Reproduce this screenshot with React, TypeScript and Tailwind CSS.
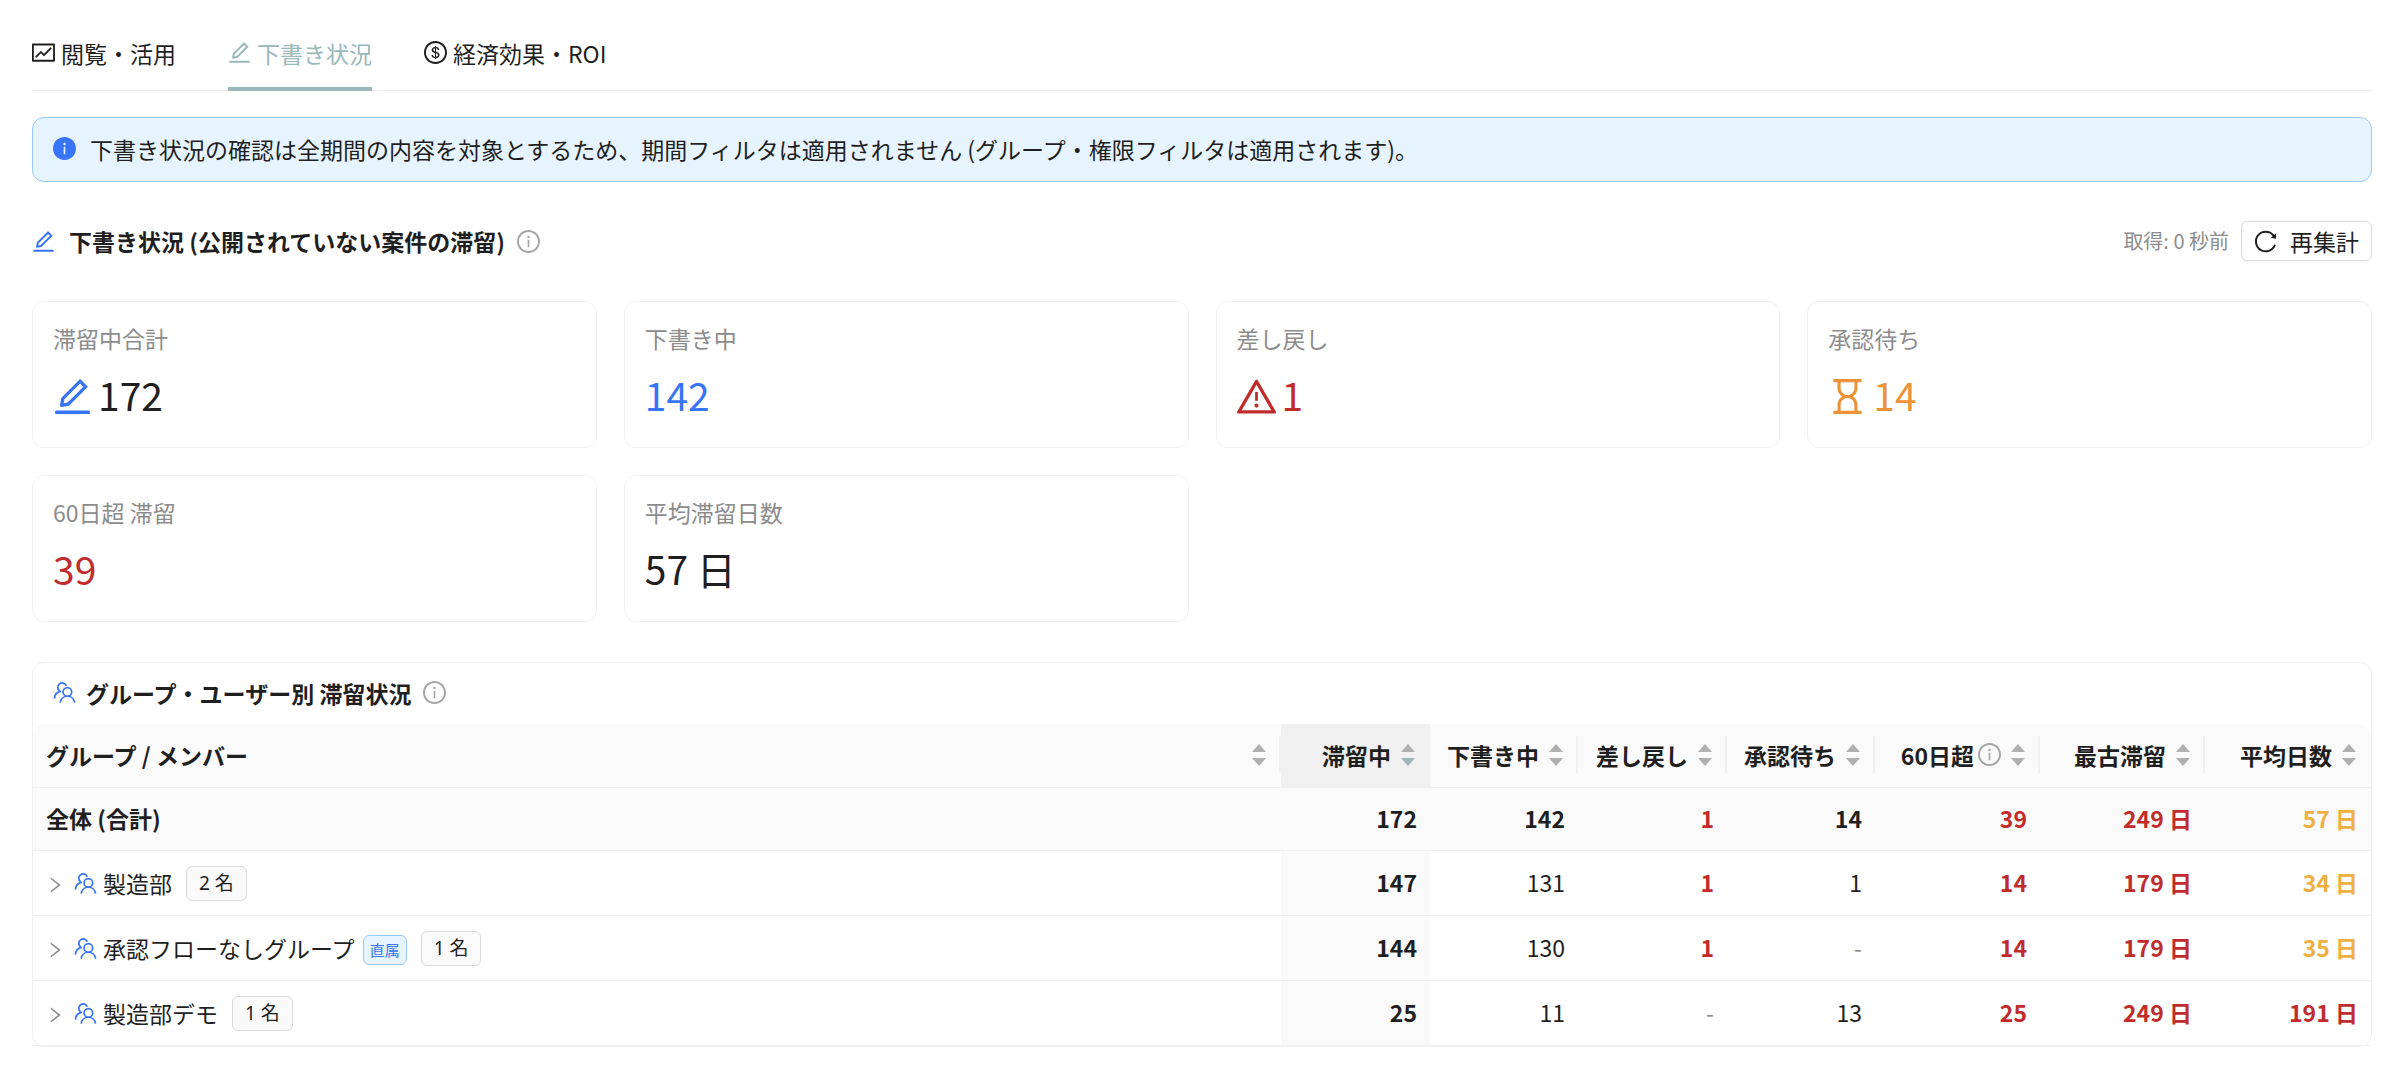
import { useState, type ReactNode } from "react";
import {
  AiFillInfoCircle,
  AiOutlineDollar,
  AiOutlineEdit,
  AiOutlineFund,
  AiOutlineHourglass,
  AiOutlineInfoCircle,
  AiOutlineReload,
  AiOutlineRight,
  AiOutlineWarning,
} from "react-icons/ai";
import clsx from "clsx";

const RED = "text-[#c02c2c]";
const AMBER = "text-[#efaf41]";

// trims the empty margin that the icon set keeps around each glyph
const TRIM = "64 64 896 896";

const TABS = [
  { key: "usage", label: "閲覧・活用", icon: <AiOutlineFund viewBox={TRIM} /> },
  { key: "drafts", label: "下書き状況", icon: <AiOutlineEdit viewBox={TRIM} /> },
  { key: "roi", label: "経済効果・ROI", icon: <AiOutlineDollar viewBox={TRIM} /> },
];

type Stat = { label: string; value: string; icon?: ReactNode; color?: string; iconColor?: string };

const STATS: Stat[] = [
  { label: "滞留中合計", value: "172", icon: <AiOutlineEdit viewBox={TRIM} />, iconColor: "text-[#3875f6]" },
  { label: "下書き中", value: "142", color: "text-[#3875f6]" },
  { label: "差し戻し", value: "1", icon: <AiOutlineWarning viewBox={TRIM} />, color: RED },
  { label: "承認待ち", value: "14", icon: <AiOutlineHourglass viewBox={TRIM} />, color: "text-[#ec9239]" },
  { label: "60日超 滞留", value: "39", color: RED },
  { label: "平均滞留日数", value: "57 日" },
];

const COLUMNS = [
  { key: "name", label: "グループ / メンバー", width: "" },
  { key: "total", label: "滞留中", width: "w-[149px]" },
  { key: "draft", label: "下書き中", width: "w-[148px]" },
  { key: "rejected", label: "差し戻し", width: "w-[149px]" },
  { key: "waiting", label: "承認待ち", width: "w-[148px]" },
  { key: "over60", label: "60日超", width: "w-[165px]", hint: true },
  { key: "oldest", label: "最古滞留", width: "w-[165px]" },
  { key: "average", label: "平均日数", width: "w-[166px]" },
];

type Row = {
  name: string;
  members?: number;
  direct?: boolean;
  total: number;
  draft: number;
  rejected: number;
  waiting: number;
  over60: number;
  oldest: number;
  average: number;
};

const ROWS: Row[] = [
  { name: "全体 (合計)", total: 172, draft: 142, rejected: 1, waiting: 14, over60: 39, oldest: 249, average: 57 },
  { name: "製造部", members: 2, total: 147, draft: 131, rejected: 1, waiting: 1, over60: 14, oldest: 179, average: 34 },
  { name: "承認フローなしグループ", members: 1, direct: true, total: 144, draft: 130, rejected: 1, waiting: 0, over60: 14, oldest: 179, average: 35 },
  { name: "製造部デモ", members: 1, total: 25, draft: 11, rejected: 0, waiting: 13, over60: 25, oldest: 249, average: 191 },
];

function GroupIcon({ className }: { className?: string }) {
  return (
    <svg viewBox="0 0 24 24" fill="none" stroke="currentColor" strokeWidth="1.8" className={className} aria-hidden="true">
      <circle cx="15" cy="11.400" r="4.500" />
      <path d="M7.500 22.600c.4-3.900 3.400-6.700 7.500-6.700s7.100 2.800 7.500 6.700" />
      <path d="M13.900 4.900A4.600 4.600 0 1 0 6.900 10.300" />
      <path d="M1.500 18.400c.2-3.400 2-6.200 5.200-7.300l1.700-.3" />
    </svg>
  );
}

function Sorter({ active }: { active?: boolean }) {
  return (
    <svg viewBox="0 0 14 22" className="h-[22px] w-3.5 shrink-0" aria-hidden="true">
      <path d="M7 0l7 8H0z" fill="#b0b0b0" />
      <path d="M7 22l7-8H0z" fill={active ? "#9ab8b9" : "#b0b0b0"} />
    </svg>
  );
}

function Count({ value, className }: { value: number; className?: string }) {
  if (value === 0) return <span className="text-[#8c8c8c]">-</span>;
  return <span className={className}>{value}</span>;
}

export default function App() {
  const [tab, setTab] = useState("drafts");

  return (
    <main className="min-h-screen bg-white pt-6 pr-6 pb-8 pl-8 font-['Noto_Sans_CJK_JP',sans-serif] text-[23px] leading-9 text-[#1f1f1f]">
      <div role="tablist" className="flex gap-[52px] border-b border-[#f0f0f0]">
        {TABS.map((t) => (
          <button
            key={t.key}
            type="button"
            role="tab"
            aria-selected={tab === t.key}
            onClick={() => setTab(t.key)}
            className={clsx(
              "-mb-px flex h-[67px] items-center gap-1.5 border-b-4 pb-1.5",
              tab === t.key ? "border-[#9ab8b9] text-[#9ab8b9]" : "border-transparent",
            )}
          >
            {t.icon}
            {t.label}
          </button>
        ))}
      </div>

      <div role="alert" className="mt-[26px] flex h-[65px] items-center gap-3.5 rounded-xl border border-[#9ac8fb] bg-[#e6f4ff] px-5 pb-0.5">
        <AiFillInfoCircle viewBox={TRIM} className="shrink-0 text-[#3875f6]" />
        下書き状況の確認は全期間の内容を対象とするため、期間フィルタは適用されません (グループ・権限フィルタは適用されます)。
      </div>

      <div className="mt-[39px] flex items-center justify-between">
        <h2 className="flex items-center font-bold">
          <AiOutlineEdit viewBox={TRIM} className="mr-3.5 text-[#3875f6]" />
          下書き状況 (公開されていない案件の滞留)
          <AiOutlineInfoCircle viewBox={TRIM} className="ml-3 text-[#a6a6a6]" />
        </h2>
        <div className="flex items-center gap-3">
          <span className="text-[20px] text-[#8c8c8c]">取得: 0 秒前</span>
          <button type="button" className="flex h-10 items-center gap-[13px] rounded-md border border-[#d9d9d9] px-3 shadow-[0_3px_0_rgba(0,0,0,0.02)]">
            <AiOutlineReload viewBox={TRIM} />
            再集計
          </button>
        </div>
      </div>

      <div className="mt-10 grid grid-cols-4 gap-[27px]">
        {STATS.map((s) => (
          <div key={s.label} className="h-[147px] rounded-xl border border-[#f0f0f0] px-5 pt-[18px]">
            <div className="text-[#8c8c8c]">{s.label}</div>
            <div className={clsx("mt-2.5 flex h-14 items-center gap-1.5 text-[39px]", s.color)}>
              {s.icon && <span className={clsx("pt-1", s.iconColor)}>{s.icon}</span>}
              {s.value}
            </div>
          </div>
        ))}
      </div>

      <section className="mt-10 rounded-xl border border-[#f0f0f0]">
        <h2 className="flex h-[61px] items-center px-5 pb-0.5 font-bold">
          <GroupIcon className="mr-2.5 size-[23px] text-[#3875f6]" />
          グループ・ユーザー別 滞留状況
          <AiOutlineInfoCircle viewBox={TRIM} className="ml-3 text-[#a6a6a6]" />
        </h2>
        <table className="w-full table-fixed border-separate border-spacing-0">
          <thead>
            <tr className="h-16">
              {COLUMNS.map((c, i) => (
                <th
                  key={c.key}
                  scope="col"
                  className={clsx(
                    "relative border-b border-[#f0f0f0] pr-[15px] pb-0.5 pl-[13px] text-right font-semibold",
                    c.width,
                    c.key === "total" ? "bg-[#f0f0f0]" : "bg-[#fafafa]",
                    i === 0 && "rounded-tl-xl",
                    i === COLUMNS.length - 1 && "rounded-tr-xl",
                  )}
                >
                  <button type="button" className={clsx("flex w-full items-center gap-2.5", i === 0 ? "justify-between" : "justify-end")}>
                    <span className="flex items-center gap-1 whitespace-nowrap">
                      {c.label}
                      {c.hint && <AiOutlineInfoCircle viewBox={TRIM} className="text-[#a6a6a6]" />}
                    </span>
                    <Sorter active={c.key === "total"} />
                  </button>
                  {i !== 1 && i < COLUMNS.length - 1 && <span className="absolute top-3 right-0 h-[37px] w-0.5 bg-[#f0f0f0]" />}
                </th>
              ))}
            </tr>
          </thead>
          <tbody className="[&_td]:border-b [&_td]:border-[#f0f0f0] [&_td]:px-[13px] [&_td+td]:pb-0.5">
            {ROWS.map((r) => {
              const summary = !r.members;
              return (
                <tr key={r.name} className={clsx("text-right", summary ? "h-[63px] bg-[#fafafa] font-semibold" : "h-[65px]")}>
                  <td className={clsx("text-left", summary && "pb-0.5")}>
                    {summary ? (
                      r.name
                    ) : (
                      <div className="flex items-center">
                        <button type="button" aria-label="展開" className="mr-2.5 pt-1 text-[18px] text-[#8c8c8c]">
                          <AiOutlineRight viewBox={TRIM} />
                        </button>
                        <GroupIcon className="mr-1.5 size-[23px] text-[#3875f6]" />
                        {r.name}
                        {r.direct && (
                          <span className="mt-1 ml-2 rounded-md border border-[#9ac8fb] bg-[#e6f4ff] px-1.5 text-[15px] leading-7 text-[#3875f6]">直属</span>
                        )}
                        <span className="ml-3.5 rounded-md border border-[#d9d9d9] bg-[#fafafa] px-3 font-['Noto_Sans','Noto_Sans_CJK_JP',sans-serif] text-[19px] leading-[33px]">
                          {r.members} 名
                        </span>
                      </div>
                    )}
                  </td>
                  <td className="bg-[#fafafa] font-semibold">{r.total}</td>
                  <td>{r.draft}</td>
                  <td><Count value={r.rejected} className={clsx("font-semibold", RED)} /></td>
                  <td><Count value={r.waiting} /></td>
                  <td className={clsx("font-semibold", RED)}>{r.over60}</td>
                  <td className={clsx("font-semibold", RED)}>{r.oldest} 日</td>
                  <td className={clsx("font-semibold", r.average > 60 ? RED : AMBER)}>{r.average} 日</td>
                </tr>
              );
            })}
          </tbody>
        </table>
      </section>
    </main>
  );
}
